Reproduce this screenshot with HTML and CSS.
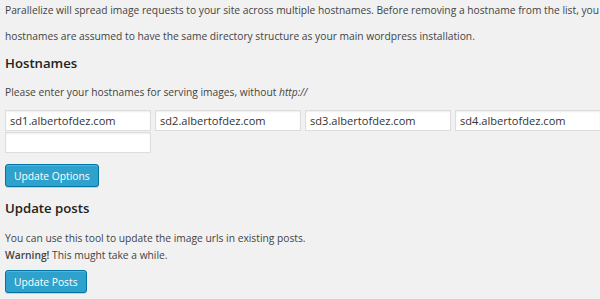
FILE: index.html
```html
<!DOCTYPE html>
<html>
<head>
<meta charset="utf-8">
<link rel="stylesheet" href="styles.css">
</head>
<body>
<div class="wrap">
  <p class="intro">Parallelize will spread image requests to your site across multiple hostnames. Before removing a hostname from the list, you</p>
  <p class="intro">hostnames are assumed to have the same directory structure as your main wordpress installation.</p>
  <h3 class="title">Hostnames</h3>
  <p class="desc">Please enter your hostnames for serving images, without <em>http://</em></p>
  <div class="hosts">
    <input class="host" type="text" value="sd1.albertofdez.com">
    <input class="host" type="text" value="sd2.albertofdez.com">
    <input class="host" type="text" value="sd3.albertofdez.com">
    <input class="host" type="text" value="sd4.albertofdez.com">
    <input class="host" type="text" value="">
  </div>
  <button class="btn btn-options">Update Options</button>
  <h3 class="title title-posts">Update posts</h3>
  <p class="desc desc-posts">You can use this tool to update the image urls in existing posts.<br><strong>Warning!</strong> This mught take a while.</p>
  <button class="btn btn-posts">Update Posts</button>
</div>
</body>
</html>
```
FILE: styles.css
```css
html, body {
  margin: 0;
  padding: 0;
  background: #f1f1f1;
}
body {
  font-family: "Open Sans", "Noto Sans", sans-serif;
  font-size: 10.25px;
  color: #444;
}
.wrap {
  padding: 0 0 0 5px;
  overflow: hidden;
  height: 299px;
}
.intro {
  margin: 0;
  height: 26px;
  line-height: 20px;
  white-space: nowrap;
}
.title {
  font-size: 13.2px;
  font-weight: 600;
  color: #222;
  margin: 0;
  padding-top: 0;
  line-height: 22px;
}
.desc {
  margin: 0;
  padding-top: 10px;
  line-height: 17px;
}
.desc strong {
  font-weight: 600;
}
.hosts {
  display: flex;
  flex-wrap: wrap;
  gap: 1px 4px;
  width: 620px;
  margin-top: 9px;
}
.host {
  box-sizing: border-box;
  width: 146px;
  height: 21px;
  margin: 0;
  padding: 0 4px;
  border: 1px solid #ddd;
  background: #fff;
  font-family: "Open Sans", "Noto Sans", sans-serif;
  font-size: 11.1px;
  color: #333;
  box-shadow: inset 0 1px 2px rgba(0,0,0,0.07);
  outline: none;
}
.btn {
  display: block;
  box-sizing: border-box;
  height: 23px;
  padding: 0 8px;
  margin-top: 11px;
  border: 1px solid #0074a2;
  border-radius: 3px;
  background: #2ea2cc;
  color: #fff;
  font-family: "Open Sans", "Noto Sans", sans-serif;
  font-size: 10.25px;
  box-shadow: inset 0 1px 0 rgba(120,200,230,0.5), 0 1px 0 rgba(0,0,0,0.15);
}
.title-posts {
  padding-top: 10px;
}
.desc-posts {
  padding-top: 11px;
}
.btn-posts {
  margin-top: 6px;
}
```
